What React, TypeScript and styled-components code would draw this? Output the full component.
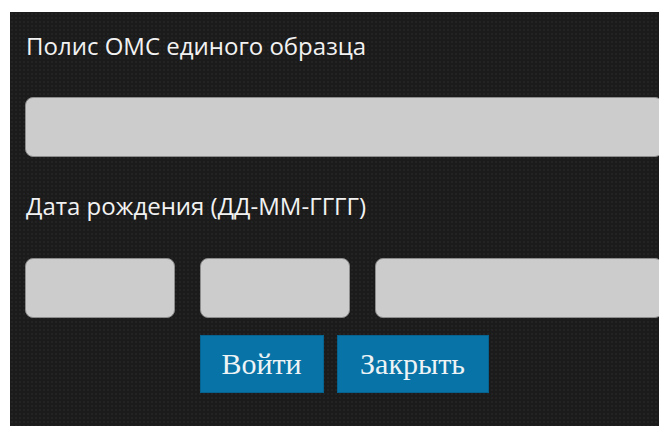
import styled, { createGlobalStyle } from 'styled-components';

const GlobalStyle = createGlobalStyle`
  html, body {
    margin: 0;
    padding: 0;
    background: #ffffff;
    overflow: hidden;
  }
`;

const Page = styled.div`
  margin: 12px 0 0 10px;
  height: 414px;
  overflow: hidden;
  background-color: #1b1b1b;
  background-image: radial-gradient(circle at 50% 50%, #232323 0 1px, transparent 1.5px);
  background-size: 4px 4px;
`;

const Form = styled.form`
  width: 638px;
  padding: 19px 0 0 15px;
  display: flex;
  flex-direction: column;
`;

const Label = styled.label`
  font-family: 'Open Sans', 'Noto Sans', sans-serif;
  font-size: 24px;
  line-height: 30px;
  color: #f2f2f2;
  padding-left: 1px;
`;

const Field = styled.input`
  box-sizing: border-box;
  height: 60px;
  margin: 0;
  padding: 0 12px;
  border: 1px solid #8c8c8c;
  border-radius: 8px;
  background: #cccccc;
  font-size: 20px;
  outline: none;
`;

const WideField = styled(Field)`
  width: 100%;
  margin: 36px 0 34px;
`;

const DateRow = styled.div`
  display: flex;
  gap: 25px;
  margin-top: 37px;
`;

const DatePart = styled(Field)<{ $grow?: boolean }>`
  width: 150px;
  flex: ${(p) => (p.$grow ? '1' : '0 0 150px')};
  min-width: 0;
`;

const Actions = styled.div`
  display: flex;
  justify-content: center;
  gap: 13px;
  margin-top: 17px;
`;

const Button = styled.button<{ $width: number }>`
  width: ${(p) => p.$width}px;
  height: 58px;
  border: 1px solid #06628e;
  background: #0873a6;
  color: #eef3f6;
  font-family: 'Liberation Serif', 'DejaVu Serif', serif;
  font-size: 30px;
  padding: 0;
  cursor: pointer;
`;

export default function App() {
  return (
    <>
      <GlobalStyle />
      <Page>
        <Form onSubmit={(e) => e.preventDefault()}>
          <Label>Полис ОМС единого образца</Label>
          <WideField type="text" />
          <Label>Дата рождения (ДД-ММ-ГГГГ)</Label>
          <DateRow>
            <DatePart type="text" />
            <DatePart type="text" />
            <DatePart type="text" $grow />
          </DateRow>
          <Actions>
            <Button type="submit" $width={124}>Войти</Button>
            <Button type="button" $width={152}>Закрыть</Button>
          </Actions>
        </Form>
      </Page>
    </>
  );
}
